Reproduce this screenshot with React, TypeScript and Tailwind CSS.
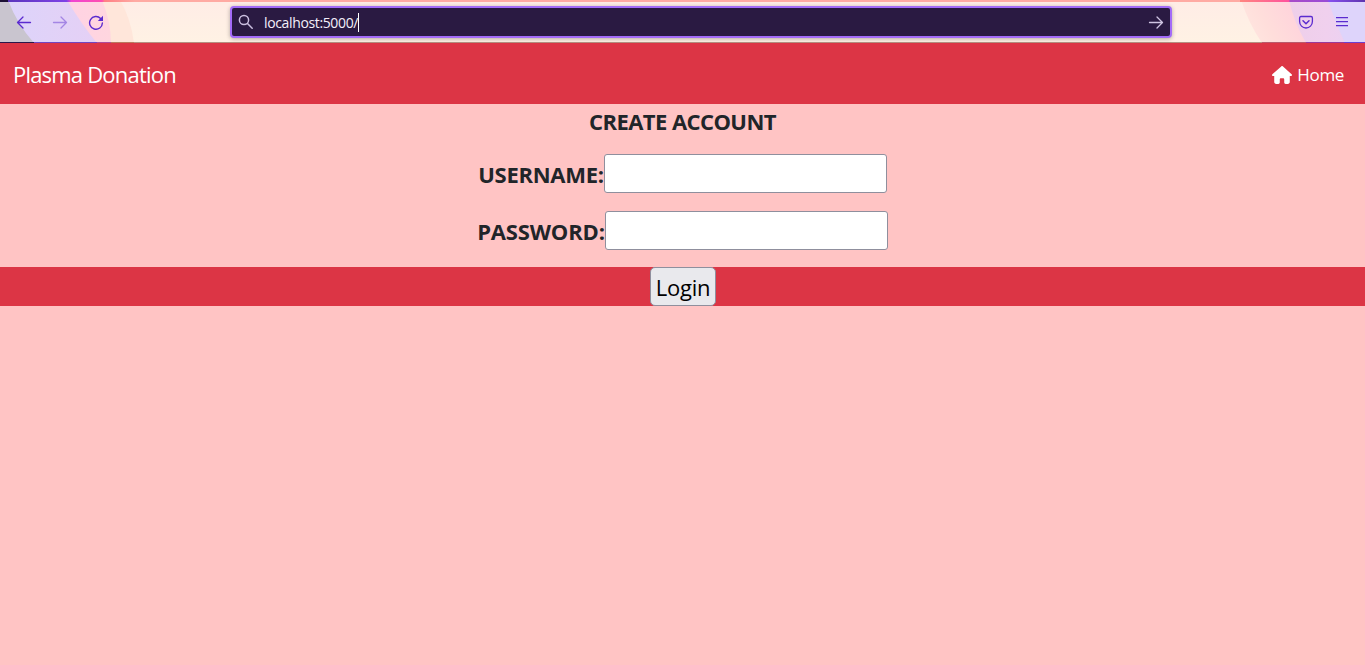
import React from "react";

function ThemeBackdrop() {
  return (
    <svg className="absolute inset-0 h-full w-full" viewBox="0 0 1365 43" preserveAspectRatio="none" aria-hidden="true">
      <defs>
        <linearGradient id="cream" x1="0" y1="0" x2="0" y2="1">
          <stop offset="0" stopColor="#ffece6" />
          <stop offset="1" stopColor="#fff2e4" />
        </linearGradient>
        <linearGradient id="lilac" x1="0" y1="0" x2="1" y2="0">
          <stop offset="0" stopColor="#dcd4fb" />
          <stop offset="1" stopColor="#e5d0f5" />
        </linearGradient>
        <linearGradient id="pink" x1="0" y1="0" x2="1" y2="0">
          <stop offset="0" stopColor="#ffcdea" />
          <stop offset="1" stopColor="#ffd6df" />
        </linearGradient>
        <linearGradient id="peach" gradientUnits="userSpaceOnUse" x1="1220" y1="43" x2="1300" y2="0">
          <stop offset="0" stopColor="#fff0e5" />
          <stop offset="0.55" stopColor="#ffdedb" />
          <stop offset="1" stopColor="#ffd0dc" />
        </linearGradient>
        <linearGradient id="orchid" x1="0" y1="0" x2="1" y2="0">
          <stop offset="0" stopColor="#eecfe9" />
          <stop offset="0.5" stopColor="#f0d0ee" />
          <stop offset="1" stopColor="#e8d2f4" />
        </linearGradient>
        <linearGradient id="topLeft" gradientUnits="userSpaceOnUse" x1="8" y1="0" x2="135" y2="0">
          <stop offset="0" stopColor="#5b35bd" />
          <stop offset="0.46" stopColor="#7e42e6" />
          <stop offset="0.5" stopColor="#f044d2" />
          <stop offset="0.74" stopColor="#ff4fb0" />
          <stop offset="0.76" stopColor="#ff7f84" />
          <stop offset="1" stopColor="#ffaaa3" />
        </linearGradient>
        <linearGradient id="topRight" gradientUnits="userSpaceOnUse" x1="1240" y1="0" x2="1365" y2="0">
          <stop offset="0" stopColor="#ff8580" />
          <stop offset="0.39" stopColor="#ff529c" />
          <stop offset="0.4" stopColor="#a84bc8" />
          <stop offset="0.7" stopColor="#9a4cd6" />
          <stop offset="0.71" stopColor="#8650ef" />
          <stop offset="1" stopColor="#5f35ae" />
        </linearGradient>
      </defs>
      <rect width="1365" height="43" fill="url(#cream)" />
      <path d="M0 0H120Q131 19 134 43H0Z" fill="#ffe6da" />
      <path d="M0 0H102Q111 22 111 43H0Z" fill="url(#pink)" />
      <path d="M0 0H67Q82 25 97 43H0Z" fill="url(#lilac)" />
      <path d="M0 0H8Q17 24 34 43H0Z" fill="#c9c5cf" />
      <path d="M1241 0H1365V43H1262Q1249 24 1241 0Z" fill="url(#peach)" />
      <path d="M1289 0H1365V43H1306Q1294 22 1289 0Z" fill="url(#orchid)" />
      <path d="M1328 0H1365V43H1345Q1336 24 1328 0Z" fill="#ded4fb" />
      <rect width="1365" height="2" fill="#ffaaa3" />
      <rect width="8" height="2" fill="#1c1034" />
      <rect x="8" width="127" height="2" fill="url(#topLeft)" />
      <rect x="1240" width="125" height="2" fill="url(#topRight)" />
      <rect y="42" width="1365" height="1" fill="#b59080" />
      <rect y="42" width="34" height="1" fill="#2a174b" />
      <rect x="34" y="42" width="63" height="1" fill="#7145c0" />
      <rect x="97" y="42" width="14" height="1" fill="#ae4c9b" />
      <rect x="111" y="42" width="23" height="1" fill="#ba795f" />
      <rect x="1262" y="42" width="44" height="1" fill="#b95a6b" />
      <rect x="1306" y="42" width="38" height="1" fill="#983a9b" />
      <rect x="1344" y="42" width="21" height="1" fill="#6b3fd0" />
    </svg>
  );
}

function ArrowIcon({ flip = false, className }: { flip?: boolean; className: string }) {
  return (
    <svg className={className} width="16" height="16" viewBox="0 0 16 16" fill="none" stroke="currentColor" strokeWidth="1.3" strokeLinecap="round" strokeLinejoin="round">
      <path d={flip ? "M1.500 8.500H14.500M9 3L14.500 8.500L9 14" : "M14.500 8.500H1.500M7 3L1.500 8.500L7 14"} />
    </svg>
  );
}

function BrowserBar() {
  return (
    <div className="relative h-[43px] w-full overflow-hidden">
      <ThemeBackdrop />
      <div className="relative flex h-full items-start text-[#5b2bcf]">
        <div className="flex w-[230px] gap-5 pl-4 pt-[14px]">
          <ArrowIcon className="shrink-0" />
          <ArrowIcon flip className="shrink-0 opacity-45" />
          <svg className="shrink-0" width="16" height="16" viewBox="0 0 16 16" fill="none" stroke="currentColor" strokeWidth="1.4">
            <path d="M12.6 4.400A6.400 6.400 0 1 0 14.400 9" strokeLinecap="round" />
            <path d="M15 1.800V7H9.800Z" fill="currentColor" stroke="none" />
          </svg>
        </div>
        <div className="mt-[6px] flex h-8 w-[942px] items-center rounded-[4px] border-2 border-[#a36bf8] bg-[#2a1a42] pl-[6px] pr-[6px] shadow-[0_1px_4px_rgba(0,0,0,0.3)]">
          <svg width="16" height="16" viewBox="0 0 16 16" fill="none" stroke="#cbbfe0" strokeWidth="1.5" strokeLinecap="round">
            <circle cx="6" cy="6" r="4.600" />
            <path d="M9.500 9.500L14.200 14.200" />
          </svg>
          <span className="ml-[10px] flex border-r border-white font-['Open_Sans','Noto_Sans',sans-serif] text-[14px] leading-[18px] tracking-[-0.36px] text-[#f3effa]">
            <span className="pt-px leading-[18px]">localhost:5000/</span>
          </span>
          <ArrowIcon flip className="ml-auto text-[#cfc4e2]" />
        </div>
        <div className="ml-auto flex gap-5 pr-[15px] pt-[14px]">
          <svg width="16" height="16" viewBox="0 0 16 16" fill="none" stroke="currentColor" strokeWidth="1.3" strokeLinecap="round" strokeLinejoin="round">
            <path d="M3 2.500H13Q14.400 2.500 14.400 3.900V7.600A6.400 6.400 0 0 1 1.600 7.600V3.900Q1.600 2.500 3 2.500Z" />
            <path d="M5 6.800L8 9.700L11 6.800" strokeWidth="1.5" />
          </svg>
          <svg width="16" height="16" viewBox="0 0 16 16" fill="none" stroke="currentColor" strokeWidth="1.35">
            <path d="M2 3.600H14M2 7.600H14M2 11.600H14" />
          </svg>
        </div>
      </div>
    </div>
  );
}

function Field({ label, type, className }: { label: string; type: string; className: string }) {
  return (
    <label className={className}>
      <span className="whitespace-nowrap pt-[2px]">{label}</span>
      <input type={type} className="h-[39px] w-[283px] shrink-0 rounded-[3px] border border-[#8f8f9d] bg-white px-1 font-normal outline-none" />
    </label>
  );
}

export default function App() {
  return (
    <div className="flex h-[665px] w-full flex-col overflow-hidden bg-[#ffc4c4] font-['Open_Sans','Noto_Sans',sans-serif] text-[#212529]">
      <BrowserBar />
      <nav className="flex h-[61px] shrink-0 items-center justify-between bg-[#dc3545] pl-[13px] pr-[21px] text-white">
        <a className="pt-px text-[22px] leading-8 tracking-[-0.8px]">Plasma Donation</a>
        <a className="flex items-center gap-[5px] pt-[3px] text-[17px] leading-6 tracking-[-0.35px]">
          <svg width="20" height="18" viewBox="0 0 576 512" fill="currentColor">
            <path d="M575.8 255.500c0 18-15 32.100-32 32.100h-32l.7 160.200c0 36-22 64.200-56 64.200H392c-22 0-40-18-40-40v-88c0-18-14-32-32-32h-64c-18 0-32 14-32 32v88c0 22-18 40-40 40h-64c-34 0-56-26-56-56V287.600H32c-18 0-32-14-32-32.100 0-9 3-17 10-24L266.400 8c7-7 15-8 22-8s15 2 21 7l255 224.500c8 7 12 15 11.400 24z" />
          </svg>
          <span>Home</span>
        </a>
      </nav>
      <main className="flex flex-col items-center text-[22px] font-bold leading-[33px]">
        <h1 className="mt-px tracking-[-0.57px]">CREATE ACCOUNT</h1>
        <Field label="USERNAME:" type="text" className="mt-[16px] flex items-center tracking-[-0.26px]" />
        <Field label="PASSWORD:" type="password" className="mt-[18px] flex items-center tracking-[-0.15px]" />
        <div className="mt-[17px] flex h-[39px] w-full justify-center bg-[#dc3545]">
          <button className="h-[39px] w-[66px] rounded-[5px] border border-[#8f8f9d] bg-[#e9e9ed] pl-px pt-px font-normal tracking-[-0.2px] text-black">Login</button>
        </div>
      </main>
    </div>
  );
}
